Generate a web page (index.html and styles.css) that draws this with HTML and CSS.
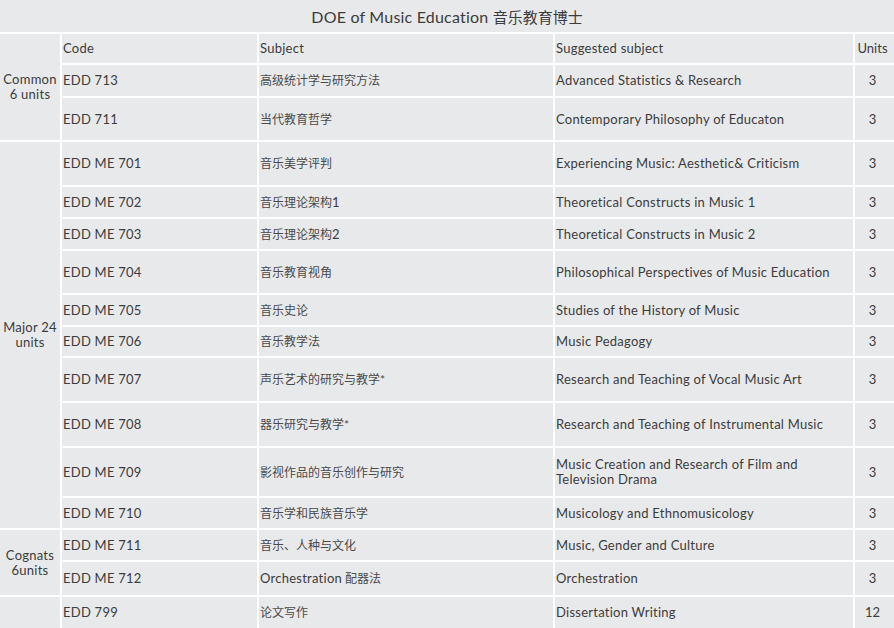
FILE: index.html
```html
<!DOCTYPE html>
<html lang="zh">
<head>
<meta charset="utf-8">
<title>DOE of Music Education</title>
<link rel="stylesheet" href="styles.css">
</head>
<body>
<div class="grid">
  <div class="title">DOE of Music Education&nbsp;<span class="zh-t">音乐教育博士</span></div>

  <div class="group g-common">Common<br>6 units</div>
  <div class="c">Code</div><div class="c">Subject</div><div class="c">Suggested subject</div><div class="c u">Units</div>
  <div class="c">EDD 713</div><div class="c zh">高级统计学与研究方法</div><div class="c">Advanced Statistics &amp; Research</div><div class="c u">3</div>
  <div class="c">EDD 711</div><div class="c zh">当代教育哲学</div><div class="c">Contemporary Philosophy of Educaton</div><div class="c u">3</div>

  <div class="group g-major">Major 24<br>units</div>
  <div class="c">EDD ME 701</div><div class="c zh">音乐美学评判</div><div class="c">Experiencing Music: Aesthetic&amp; Criticism</div><div class="c u">3</div>
  <div class="c">EDD ME 702</div><div class="c zh">音乐理论架构<span class="lat">1</span></div><div class="c">Theoretical Constructs in Music 1</div><div class="c u">3</div>
  <div class="c">EDD ME 703</div><div class="c zh">音乐理论架构<span class="lat">2</span></div><div class="c">Theoretical Constructs in Music 2</div><div class="c u">3</div>
  <div class="c">EDD ME 704</div><div class="c zh">音乐教育视角</div><div class="c">Philosophical Perspectives of Music Education</div><div class="c u">3</div>
  <div class="c">EDD ME 705</div><div class="c zh">音乐史论</div><div class="c">Studies of the History of Music</div><div class="c u">3</div>
  <div class="c">EDD ME 706</div><div class="c zh">音乐教学法</div><div class="c">Music Pedagogy</div><div class="c u">3</div>
  <div class="c">EDD ME 707</div><div class="c zh">声乐艺术的研究与教学*</div><div class="c">Research and Teaching of Vocal Music Art</div><div class="c u">3</div>
  <div class="c">EDD ME 708</div><div class="c zh">器乐研究与教学*</div><div class="c">Research and Teaching of Instrumental Music</div><div class="c u">3</div>
  <div class="c">EDD ME 709</div><div class="c zh">影视作品的音乐创作与研究</div><div class="c">Music Creation and Research of Film and<br>Television Drama</div><div class="c u">3</div>
  <div class="c">EDD ME 710</div><div class="c zh">音乐学和民族音乐学</div><div class="c">Musicology and Ethnomusicology</div><div class="c u">3</div>

  <div class="group g-cog">Cognats<br>6units</div>
  <div class="c">EDD ME 711</div><div class="c zh">音乐、人种与文化</div><div class="c">Music, Gender and Culture</div><div class="c u">3</div>
  <div class="c">EDD ME 712</div><div class="c zh"><span class="lat">Orchestration</span>&nbsp;配器法</div><div class="c">Orchestration</div><div class="c u">3</div>

  <div class="group g-last"></div>
  <div class="c">EDD 799</div><div class="c zh">论文写作</div><div class="c">Dissertation Writing</div><div class="c u">12</div>
</div>
</body>
</html>
```
FILE: styles.css
```css
html, body {
  margin: 0;
  padding: 0;
  background: #ffffff;
}
body {
  font-family: "Lato", "Noto Sans CJK SC", sans-serif;
  font-size: 13px;
  color: #3c3c3c;
  letter-spacing: 0.25px;
}
.grid {
  width: 894px;
  height: 628px;
  display: grid;
  grid-template-columns: 60px 195px 294px 298px 39px;
  grid-template-rows: 32px 29px 31px 42px 43px 30px 30px 42px 30px 29px 43px 43px 48px 30px 30px 33px 31px;
  gap: 2px;
  background: #ffffff;
  overflow: hidden;
}
.grid > div {
  background: #e8e9ea;
}
.title {
  grid-column: 1 / -1;
  display: flex;
  align-items: center;
  justify-content: center;
  font-size: 16px;
  letter-spacing: 0.2px;
}
.zh-t {
  font-size: 15px;
  letter-spacing: 0;
}
.c {
  display: flex;
  align-items: center;
  padding-left: 1px;
  line-height: 15px;
}
.zh {
  font-size: 12px;
  letter-spacing: 0;
  color: #4a4a4a;
}
.zh .lat {
  font-size: 13px;
  letter-spacing: 0.25px;
  color: #3c3c3c;
}
.u {
  justify-content: center;
  padding-left: 0;
  padding-right: 4px;
  letter-spacing: 0;
}
.group {
  grid-column: 1;
  display: flex;
  align-items: center;
  justify-content: center;
  text-align: center;
  line-height: 15px;
}
.g-common { grid-row: 2 / span 3; }
.g-major { grid-row: 5 / span 10; }
.g-cog { grid-row: 15 / span 2; }
.g-last { grid-row: 17; }
```
